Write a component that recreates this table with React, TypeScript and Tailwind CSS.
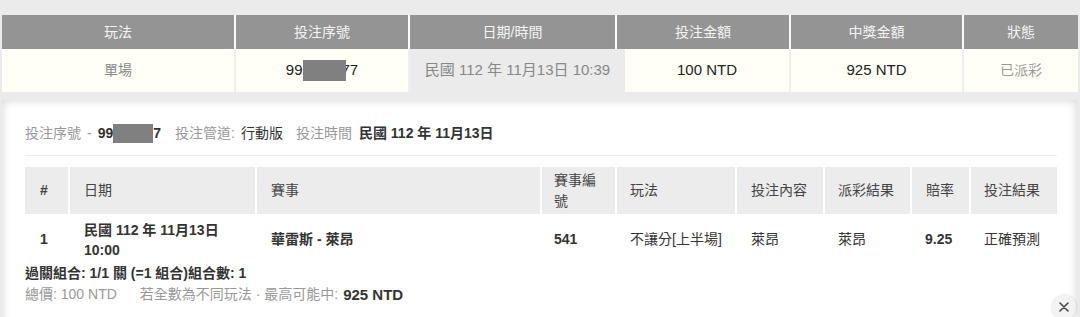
import React from "react";

const font = {
  fontFamily: '"Liberation Sans", Arial, "Noto Sans CJK TC", sans-serif',
};

function Redact({ w, h }: { w: number; h: number }) {
  return (
    <span
      className="inline-block bg-[#808080] align-middle relative z-10"
      style={{ width: w, height: h }}
    />
  );
}

export default function App() {
  return (
    <div
      className="w-[1080px] h-[317px] overflow-hidden bg-[#ebebeb] text-[14px]"
      style={font}
    >
      {/* Top summary table */}
      <div className="pt-[15px] pl-[2px]">
        <div className="flex w-[1076px] gap-[2px] bg-[#fafafa] h-[34px]">
          {[
            ["玩法", 232],
            ["投注序號", 172],
            ["日期/時間", 205],
            ["投注金額", 172],
            ["中獎金額", 171],
            ["狀態", 114],
          ].map(([t, w]) => (
            <div
              key={t as string}
              className="bg-[#949494] text-[#f4f4f4] flex items-center justify-center"
              style={{ width: w as number }}
            >
              {t}
            </div>
          ))}
        </div>
        <div className="flex w-[1076px] h-[43px] bg-[#efefef] text-[15px]">
          <div className="w-[232px] bg-[#fffff6] flex items-center justify-center text-[#888] text-[14px]">
            單場
          </div>
          <div className="w-[2px]" />
          <div className="w-[172px] bg-[#fffff6] flex items-center justify-center text-[#222]">
            <span>99</span>
            <Redact w={43} h={21} />
            <span className="-ml-[4px]">77</span>
          </div>
          <div className="w-[2px]" />
          <div className="w-[215px] bg-[#ebebeb] flex items-center justify-center text-[#888]">
            民國 112 年 11月13日 10:39
          </div>
          <div className="w-[164px] bg-[#fffff6] flex items-center justify-center text-[#222]">
            100 NTD
          </div>
          <div className="w-[2px]" />
          <div className="w-[171px] bg-[#fffff6] flex items-center justify-center text-[#222]">
            925 NTD
          </div>
          <div className="w-[2px]" />
          <div className="w-[114px] bg-[#fffff6] flex items-center justify-center text-[#999] text-[14px]">
            已派彩
          </div>
        </div>
      </div>

      {/* Detail panel */}
      <div className="relative mt-[8px] ml-[2px] w-[1075px] h-[240px] bg-white shadow-[inset_0_0_10px_rgba(0,0,0,0.18)] pl-[23px] pt-[23px]">
        <div className="flex items-center h-[20px] text-[#333] w-[1032px]">
          <span className="text-[#999]">投注序號</span>
          <span className="text-[#999] ml-[6px]">-</span>
          <span className="font-bold ml-[6px]">99</span>
          <Redact w={40} h={19} />
          <span className="font-bold">7</span>
          <span className="text-[#999] ml-[14px]">投注管道:</span>
          <span className="ml-[6px]">行動版</span>
          <span className="text-[#999] ml-[13px]">投注時間</span>
          <span className="ml-[7px] font-bold">民國 112 年 11月13日</span>
        </div>
        <div className="mt-[12px] w-[1032px] h-px bg-[#eeeeee]" />

        <div className="mt-[11px] w-[1032px] grid grid-cols-[43px_185px_283px_73px_118px_86px_85px_57px_86px] gap-x-[2px] text-[#444]">
          <div className="bg-[#ececec] h-[47px] flex items-center pl-[15px] font-bold">#</div>
          <div className="bg-[#ececec] h-[47px] flex items-center pl-[14px]">日期</div>
          <div className="bg-[#ececec] h-[47px] flex items-center pl-[14px]">賽事</div>
          <div className="bg-[#ececec] h-[47px] flex items-center pl-[12px] pr-[10px] leading-[21px]">
            賽事編號
          </div>
          <div className="bg-[#ececec] h-[47px] flex items-center pl-[13px]">玩法</div>
          <div className="bg-[#ececec] h-[47px] flex items-center pl-[14px]">投注內容</div>
          <div className="bg-[#ececec] h-[47px] flex items-center pl-[13px]">派彩結果</div>
          <div className="bg-[#ececec] h-[47px] flex items-center pl-[14px]">賠率</div>
          <div className="bg-[#ececec] h-[47px] flex items-center pl-[13px]">投注結果</div>

          <div className="h-[51px] flex items-center pl-[15px] font-bold text-[#333]">1</div>
          <div className="h-[51px] flex flex-col justify-center pl-[14px] font-bold text-[#333] leading-[20px]">
            <span>民國 112 年 11月13日</span>
            <span>10:00</span>
          </div>
          <div className="h-[51px] flex items-center pl-[14px] font-bold text-[#333]">華雷斯 - 萊昂</div>
          <div className="h-[51px] flex items-center pl-[12px] font-bold text-[#333]">541</div>
          <div className="h-[51px] flex items-center pl-[13px] text-[#333]">不讓分[上半場]</div>
          <div className="h-[51px] flex items-center pl-[14px] text-[#333]">萊昂</div>
          <div className="h-[51px] flex items-center pl-[13px] text-[#333]">萊昂</div>
          <div className="h-[51px] flex items-center pl-[13px] font-bold text-[#333]">9.25</div>
          <div className="h-[51px] flex items-center pl-[13px] text-[#333]">正確預測</div>
        </div>

        <div className="-mt-[2px] leading-[21px] font-bold text-[#333]">
          過關組合: 1/1 關 (=1 組合)組合數: 1
        </div>
        <div className="leading-[21px] text-[#999] flex">
          <span>總價: 100 NTD</span>
          <span className="ml-[23px]">若全數為不同玩法 · 最高可能中:</span>
          <span className="ml-[5px] font-bold text-[#333] text-[15px]">925 NTD</span>
        </div>

        <div className="absolute left-[1050px] top-[195px] w-[24px] h-[24px] rounded-full bg-[#f3f3f3] shadow-[0_0_3px_rgba(0,0,0,0.15)] flex items-center justify-center">
          <svg width="10" height="10" viewBox="0 0 10 10">
            <path d="M1 1 L9 9 M9 1 L1 9" stroke="#444" strokeWidth="1.6" strokeLinecap="round" />
          </svg>
        </div>
      </div>
    </div>
  );
}
